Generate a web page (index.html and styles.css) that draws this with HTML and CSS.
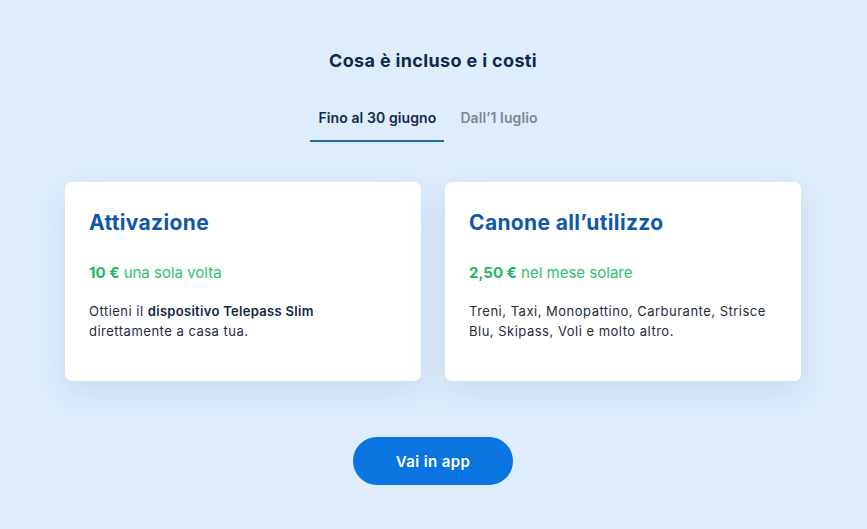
FILE: index.html
```html
<!DOCTYPE html>
<html lang="it">
<head>
<meta charset="utf-8">
<link rel="stylesheet" href="styles.css">
</head>
<body>
<section class="pricing">
  <h2 class="title">Cosa è incluso e i costi</h2>
  <nav class="tabs">
    <span class="tab active">Fino al 30 giugno</span>
    <span class="tab">Dall’1 luglio</span>
  </nav>
  <div class="cards">
    <article class="card">
      <h3 class="card-title">Attivazione</h3>
      <p class="price"><strong>10 €</strong> una sola volta</p>
      <p class="desc">Ottieni il <strong>dispositivo Telepass Slim</strong><br>direttamente a casa tua.</p>
    </article>
    <article class="card">
      <h3 class="card-title">Canone all’utilizzo</h3>
      <p class="price"><strong>2,50 €</strong> nel mese solare</p>
      <p class="desc">Treni, Taxi, Monopattino, Carburante, Strisce Blu, Skipass, Voli e molto altro.</p>
    </article>
  </div>
  <a class="cta" href="#">Vai in app</a>
</section>
</body>
</html>
```
FILE: styles.css
```css
html, body {
  margin: 0;
  padding: 0;
  background: #deecfb;
  font-family: "Inter", "Open Sans", sans-serif;
}
.pricing {
  display: flex;
  flex-direction: column;
  align-items: center;
  padding: 49px 1px 0 0;
}
.title {
  margin: 0;
  font-size: 18px;
  letter-spacing: 0.35px;
  font-weight: 700;
  color: #0d2a4f;
  line-height: 24px;
}
.tabs {
  display: flex;
  gap: 8px;
  margin-top: 35px;
  margin-right: 10px;
}
.tab {
  font-size: 14px;
  letter-spacing: 0.1px;
  font-weight: 600;
  color: #80878f;
  padding: 0 8px 12px;
  line-height: 20px;
  border-bottom: 2px solid transparent;
}
.tab.active {
  color: #102b4c;
  border-bottom-color: #1b6fa9;
}
.cards {
  display: flex;
  gap: 24px;
  margin-top: 40px;
}
.card {
  width: 356px;
  height: 199px;
  box-sizing: border-box;
  background: #fff;
  border-radius: 7px;
  padding: 28px 24px;
  box-shadow: 0 12px 32px rgba(120, 160, 210, 0.22);
}
.card-title {
  margin: 0;
  font-size: 21px;
  letter-spacing: 0.35px;
  font-weight: 700;
  color: #0e58a6;
  line-height: 26px;
}
.price {
  margin: 27px 0 0;
  font-size: 15px;
  letter-spacing: 0;
  line-height: 20px;
  color: #2bc26a;
}
.price strong {
  color: #1fb85e;
}
.desc {
  margin: 18px 0 0;
  font-size: 13px;
  letter-spacing: 0.5px;
  line-height: 20px;
  color: #1d2b3c;
}
.desc strong {
  font-weight: 600;
  letter-spacing: 0.3px;
  color: #142640;
}
.cta {
  margin-top: 56px;
  width: 160px;
  height: 48px;
  border-radius: 24px;
  background: #0a74e0;
  color: #fff;
  text-decoration: none;
  font-size: 15px;
  letter-spacing: 0.4px;
  font-weight: 600;
  display: flex;
  align-items: center;
  justify-content: center;
}
```
